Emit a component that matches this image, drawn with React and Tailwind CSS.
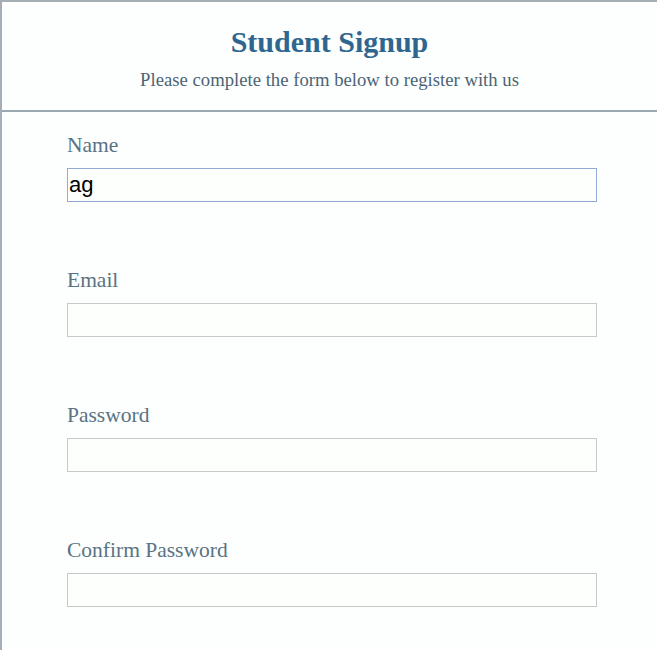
import React, { useState } from 'react';

const serif = { fontFamily: '"Liberation Serif", "Times New Roman", serif' };

const Field = ({ label, type = 'text', value, onChange, focused }) => (
    <div className="w-[530px]">
        <label className="block text-[21.5px] leading-[24px] text-[#5a7283] mb-[11px]" style={serif}>
            {label}
        </label>
        <input
            type={type}
            value={value}
            onChange={onChange}
            className={`block w-full h-[34px] px-[1px] bg-[#fdfffd] text-[22px] text-black outline-none border ${focused ? 'border-[#93a9d6]' : 'border-[#c6c9c8]'}`}
            style={{ fontFamily: '"Liberation Sans", Arial, sans-serif' }}
        />
    </div>
);

const App = () => {
    const [form, setForm] = useState({ name: 'ag', email: '', password: '', confirm: '' });

    return (
        <div className="min-h-[650px] bg-[#fcfffd] border-t-2 border-l-2 border-[#a4aeb4]" style={serif}>
            {/* Header */}
            <div className="flex flex-col items-center pt-[23px] pb-[19px] border-b-2 border-[#9ba8af]">
                <h1 className="text-[30px] leading-[34px] font-bold text-[#2f6690]">Student Signup</h1>
                <p className="mt-[10px] text-[18.7px] leading-[22px] text-[#4d6475]">
                    Please complete the form below to register with us
                </p>
            </div>

            {/* Form */}
            <div className="pl-[65px] pt-[21px] flex flex-col gap-[66px]">
                <Field label="Name" value={form.name} focused onChange={(e) => setForm({ ...form, name: e.target.value })} />
                <Field label="Email" type="email" value={form.email} onChange={(e) => setForm({ ...form, email: e.target.value })} />
                <Field label="Password" type="password" value={form.password} onChange={(e) => setForm({ ...form, password: e.target.value })} />
                <Field label="Confirm Password" type="password" value={form.confirm} onChange={(e) => setForm({ ...form, confirm: e.target.value })} />
            </div>
        </div>
    );
};

export default App;
